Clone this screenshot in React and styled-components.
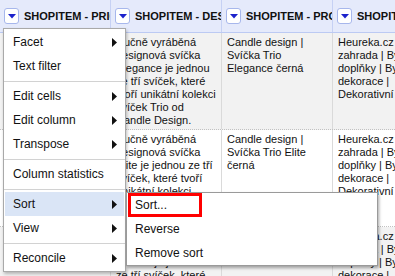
import React from "react";
import styled, { createGlobalStyle } from "styled-components";

const GlobalStyle = createGlobalStyle`
  html, body {
    margin: 0;
    padding: 0;
    background: #fff;
  }
  body {
    font-family: "Liberation Sans", Arial, Helvetica, sans-serif;
  }
`;

const Page = styled.div`
  position: relative;
  width: 395px;
  height: 276px;
  overflow: hidden;
`;

const Table = styled.div`
  display: flex;
  flex-direction: column;
  width: max-content;
`;

const HeaderRow = styled.div`
  display: flex;
  height: 32px;
  background: #e5eafb;
  border-bottom: 1px solid #bccaf3;
`;

const HeaderCell = styled.div`
  box-sizing: border-box;
  display: flex;
  align-items: center;
  gap: 5px;
  width: ${({ $w }) => $w}px;
  padding-left: 4px;
  border-right: 1px solid #c6d1f4;
  overflow: hidden;
  white-space: nowrap;
  font-size: 11px;
  font-weight: bold;
  color: #111;
`;

const ColumnButton = styled.span`
  flex: none;
  box-sizing: border-box;
  width: 15px;
  height: 16px;
  display: flex;
  align-items: center;
  justify-content: center;
  background: #fff;
  border: 1px solid #a7b7ec;
  border-radius: 3px;
`;

const Row = styled.div`
  display: flex;
  background: ${({ $odd }) => ($odd ? "#f2f2f2" : "#fff")};
  border-bottom: 1px dotted #c2c2c2;
`;

const Cell = styled.div`
  box-sizing: border-box;
  width: ${({ $w }) => $w}px;
  padding: 3px 4px 2px 5px;
  border-right: 1px solid #dadada;
  font-size: 11px;
  line-height: 13px;
  color: #111;
  white-space: nowrap;
  overflow: hidden;
`;

const Menu = styled.div`
  position: absolute;
  left: 3px;
  top: 28px;
  box-sizing: border-box;
  width: 123px;
  padding: 1px;
  background: #fff;
  border: 1px solid #a9a9a9;
  box-shadow: 1px 2px 3px rgba(0, 0, 0, 0.25);
  font-size: 12px;
  color: #111;
`;

const MenuItem = styled.div`
  position: relative;
  display: flex;
  align-items: center;
  justify-content: space-between;
  height: 24px;
  padding: 0 7px 0 8px;
  background: ${({ $active }) => ($active ? "#dae5f6" : "transparent")};
  white-space: nowrap;
`;

const Separator = styled.div`
  height: 1px;
  margin: 3px -1px 2px;
  background: #d2d2d2;
`;

const SubMenu = styled(Menu)`
  left: 126px;
  top: 192px;
  width: 252px;
  padding: 0;
  border-color: #9a9a9a;
  box-shadow: 1px 2px 3px rgba(0, 0, 0, 0.35);
`;

const Marker = styled.span`
  position: absolute;
  left: 1px;
  top: 0;
  box-sizing: border-box;
  width: 74px;
  height: 24px;
  border: 3px solid #f00;
`;

const columns = [
  { name: "SHOPITEM - PRICE_VAT", w: 111 },
  { name: "SHOPITEM - DESCRIPTION", w: 111 },
  { name: "SHOPITEM - PRODUCTNAME", w: 111 },
  { name: "SHOPITEM - CATEGORYTEXT", w: 200 },
];

const category = [
  "Heureka.cz | Dům a",
  "zahrada | Bydlení a",
  "doplňky | Bytové",
  "dekorace |",
  "Dekorativní svíčky",
];

const rows = [
  [
    ["489"],
    [
      "Ručně vyráběná",
      "designová svíčka",
      "Elegance je jednou",
      "ze tří svíček, které",
      "tvoří unikátní kolekci",
      "svíček Trio od",
      "Candle Design.",
    ],
    ["Candle design |", "Svíčka Trio", "Elegance černá"],
    category,
  ],
  [
    ["489"],
    [
      "Ručně vyráběná",
      "designová svíčka",
      "Elite je jednou ze tří",
      "svíček, které tvoří",
      "unikátní kolekci",
      "svíček Trio od",
      "Candle Design.",
    ],
    ["Candle design |", "Svíčka Trio Elite", "černá"],
    category,
  ],
  [
    ["489"],
    [
      "Ručně vyráběná",
      "designová svíčka",
      "Classic je jednou",
      "ze tří svíček, které",
      "tvoří unikátní kolekci",
    ],
    ["Candle design |", "Svíčka Trio"],
    category,
  ],
];

const menu = [
  { label: "Facet", sub: true },
  { label: "Text filter" },
  "sep",
  { label: "Edit cells", sub: true },
  { label: "Edit column", sub: true },
  { label: "Transpose", sub: true },
  "sep",
  { label: "Column statistics" },
  "sep",
  { label: "Sort", sub: true, active: true },
  { label: "View", sub: true },
  "sep",
  { label: "Reconcile", sub: true },
];

const DownArrow = () => (
  <svg width="8" height="5" viewBox="0 0 8 5">
    <polygon points="0,0 8,0 4,4.5" fill="#1c22cc" />
  </svg>
);

const RightArrow = () => (
  <svg width="5" height="9" viewBox="0 0 5 9">
    <polygon points="0,0 5,4.5 0,9" fill="#111" />
  </svg>
);

const App = () => (
  <Page>
    <GlobalStyle />
    <Table>
      <HeaderRow>
        {columns.map((c) => (
          <HeaderCell key={c.name} $w={c.w}>
            <ColumnButton>
              <DownArrow />
            </ColumnButton>
            {c.name}
          </HeaderCell>
        ))}
      </HeaderRow>
      {rows.map((row, i) => (
        <Row key={i} $odd={i % 2 === 0}>
          {row.map((lines, j) => (
            <Cell key={j} $w={columns[j].w}>
              {lines.map((l, k) => (
                <div key={k}>{l}</div>
              ))}
            </Cell>
          ))}
        </Row>
      ))}
    </Table>

    <Menu>
      {menu.map((m, i) =>
        m === "sep" ? (
          <Separator key={i} />
        ) : (
          <MenuItem key={i} $active={m.active}>
            {m.label}
            {m.sub && <RightArrow />}
          </MenuItem>
        )
      )}
    </Menu>

    <SubMenu>
      <MenuItem>
        <Marker />
        Sort...
      </MenuItem>
      <MenuItem>Reverse</MenuItem>
      <MenuItem>Remove sort</MenuItem>
    </SubMenu>
  </Page>
);

export default App;
